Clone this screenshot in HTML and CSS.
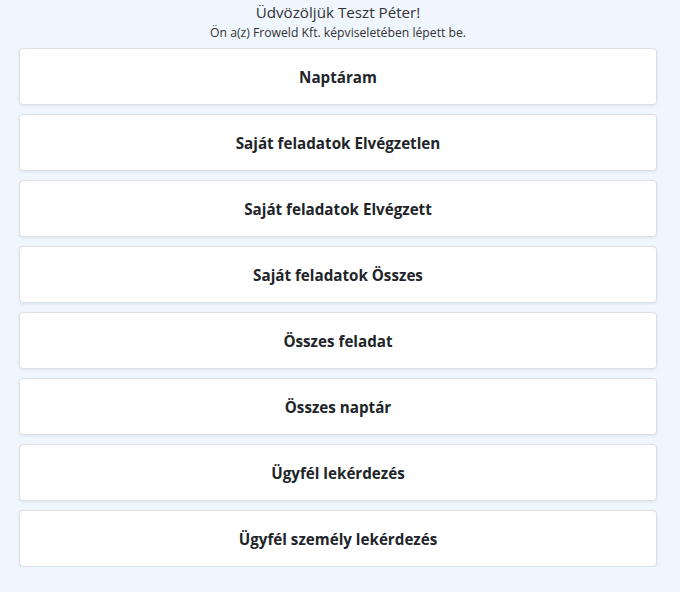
FILE: index.html
```html
<!DOCTYPE html>
<html lang="hu">
<head>
<meta charset="utf-8">
<link rel="stylesheet" href="styles.css">
</head>
<body>
<div class="page">
  <header class="welcome">
    <h1 class="title">Üdvözöljük Teszt Péter!</h1>
    <p class="subtitle">Ön a(z) Froweld Kft. képviseletében lépett be.</p>
  </header>
  <nav class="menu">
    <a class="card">Naptáram</a>
    <a class="card">Saját feladatok Elvégzetlen</a>
    <a class="card">Saját feladatok Elvégzett</a>
    <a class="card">Saját feladatok Összes</a>
    <a class="card">Összes feladat</a>
    <a class="card">Összes naptár</a>
    <a class="card">Ügyfél lekérdezés</a>
    <a class="card">Ügyfél személy lekérdezés</a>
  </nav>
</div>
</body>
</html>
```
FILE: styles.css
```css
html, body {
  margin: 0;
  padding: 0;
  background: #f0f6fd;
  font-family: "Open Sans", "Noto Sans", sans-serif;
  color: #212529;
}
.page {
  padding: 0 23px 0 19px;
}
.welcome {
  text-align: center;
  padding-top: 2px;
}
.title {
  margin: 0;
  font-size: 15.2px;
  font-weight: 400;
  line-height: 20px;
  color: #333;
}
.subtitle {
  margin: 3px 0 0;
  font-size: 12.2px;
  line-height: 16px;
  color: #333;
}
.menu {
  display: flex;
  flex-direction: column;
  gap: 9px;
  margin-top: 7px;
}
.card {
  display: flex;
  align-items: center;
  justify-content: center;
  height: 55px;
  padding-top: 1px;
  box-sizing: content-box;
  height: 54px;
  background: #fff;
  border: 1px solid #dcdfe3;
  border-radius: 4px;
  box-shadow: 0 1px 3px rgba(0,0,0,0.08);
  font-size: 15.2px;
  font-weight: 700;
  color: #212529;
}
```
